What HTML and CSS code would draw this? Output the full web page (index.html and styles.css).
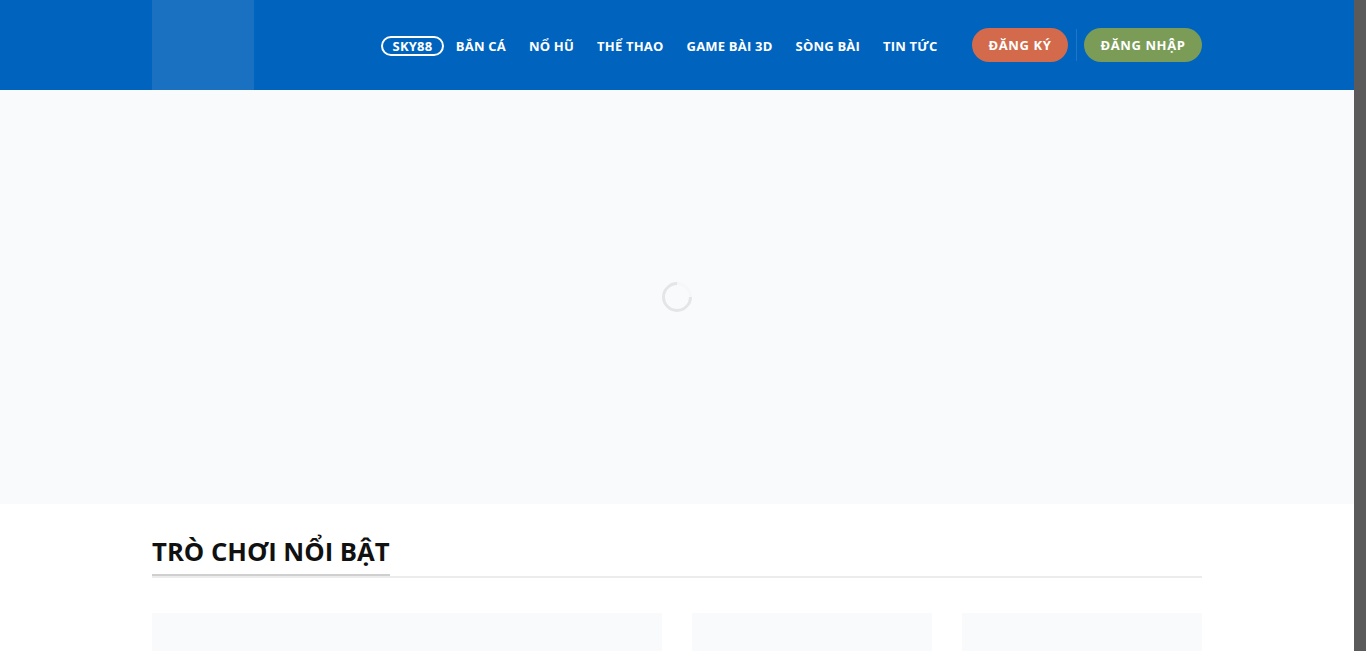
FILE: index.html
```html
<!DOCTYPE html>
<html lang="vi">
<head>
<meta charset="utf-8">
<title>SKY88</title>
<link rel="stylesheet" href="styles.css">
</head>
<body>
<div class="page">
<header class="header">
  <div class="container header-inner">
    <div class="logo"></div>
    <nav class="nav">
      <a class="nav-item active" href="#">SKY88</a>
      <a class="nav-item" href="#">BẮN CÁ</a>
      <a class="nav-item" href="#">NỔ HŨ</a>
      <a class="nav-item" href="#">THỂ THAO</a>
      <a class="nav-item" href="#">GAME BÀI 3D</a>
      <a class="nav-item" href="#">SÒNG BÀI</a>
      <a class="nav-item" href="#">TIN TỨC</a>
    </nav>
    <div class="actions">
      <a class="btn btn-register" href="#">ĐĂNG KÝ</a>
      <span class="sep"></span>
      <a class="btn btn-login" href="#">ĐĂNG NHẬP</a>
    </div>
  </div>
</header>
<section class="hero">
  <div class="spinner"></div>
</section>
<section class="games">
  <div class="container">
    <div class="section-head">
      <h2 class="section-title">TRÒ CHƠI NỔI BẬT</h2>
    </div>
    <div class="cards">
      <div class="card card-wide"></div>
      <div class="card"></div>
      <div class="card"></div>
    </div>
  </div>
</section>
</div>
<div class="scrollbar"></div>
</body>
</html>
```
FILE: styles.css
```css
body {
  margin: 0;
  font-family: "Open Sans", "Noto Sans", sans-serif;
  background: #fff;
  display: flex;
}
.page {
  flex: 1;
  min-width: 0;
}
.scrollbar {
  width: 12px;
  flex: 0 0 12px;
  background: #5a5a5a;
}
.container {
  width: 1050px;
  margin: 0 auto;
}
.header {
  background: #0064be;
  height: 90px;
}
.header-inner {
  display: flex;
  align-items: center;
  height: 100%;
}
.logo {
  width: 102px;
  height: 90px;
  background: #1a70c1;
}
.nav {
  display: flex;
  align-items: center;
  margin-left: auto;
  padding-top: 2px;
}
.nav-item {
  color: #fff;
  text-decoration: none;
  font-size: 13px;
  font-weight: 700;
  letter-spacing: 0.2px;
  padding: 0 11.5px;
  line-height: 16px;
}
.nav-item.active {
  border: 2px solid #fff;
  border-radius: 12px;
  padding: 0 10px;
}
.actions {
  display: flex;
  align-items: center;
  margin-left: 23px;
}
.btn {
  display: flex;
  align-items: center;
  justify-content: center;
  height: 34px;
  border-radius: 17px;
  color: #fff;
  text-decoration: none;
  font-size: 13px;
  font-weight: 700;
  letter-spacing: 0.6px;
}
.btn-register {
  width: 96px;
  background: #d26a4b;
}
.btn-login {
  width: 118px;
  background: #7a9c57;
}
.sep {
  width: 1px;
  height: 32px;
  background: rgba(255, 255, 255, 0.12);
  margin: 0 7px 0 8px;
}
.hero {
  height: 414px;
  background: #f8fafc;
  display: flex;
  align-items: center;
  justify-content: center;
}
.spinner {
  width: 24px;
  height: 24px;
  border: 3px solid #e4e5e7;
  border-top-color: #f6f7f9;
  border-radius: 50%;
  transform: rotate(45deg);
}
.games {
  padding-top: 30px;
}
.section-head {
  border-bottom: 2px solid #ececec;
  height: 42px;
}
.section-title {
  display: inline-block;
  margin: 0;
  font-size: 25.7px;
  font-weight: 700;
  color: #111;
  line-height: 36px;
  height: 40px;
  border-bottom: 2px solid #cfcfcf;
  margin-bottom: -2px;
}
.cards {
  display: flex;
  gap: 30px;
  margin-top: 35px;
}
.card {
  width: 240px;
  height: 200px;
  background: #f8fafc;
}
.card-wide {
  width: 510px;
}
```
